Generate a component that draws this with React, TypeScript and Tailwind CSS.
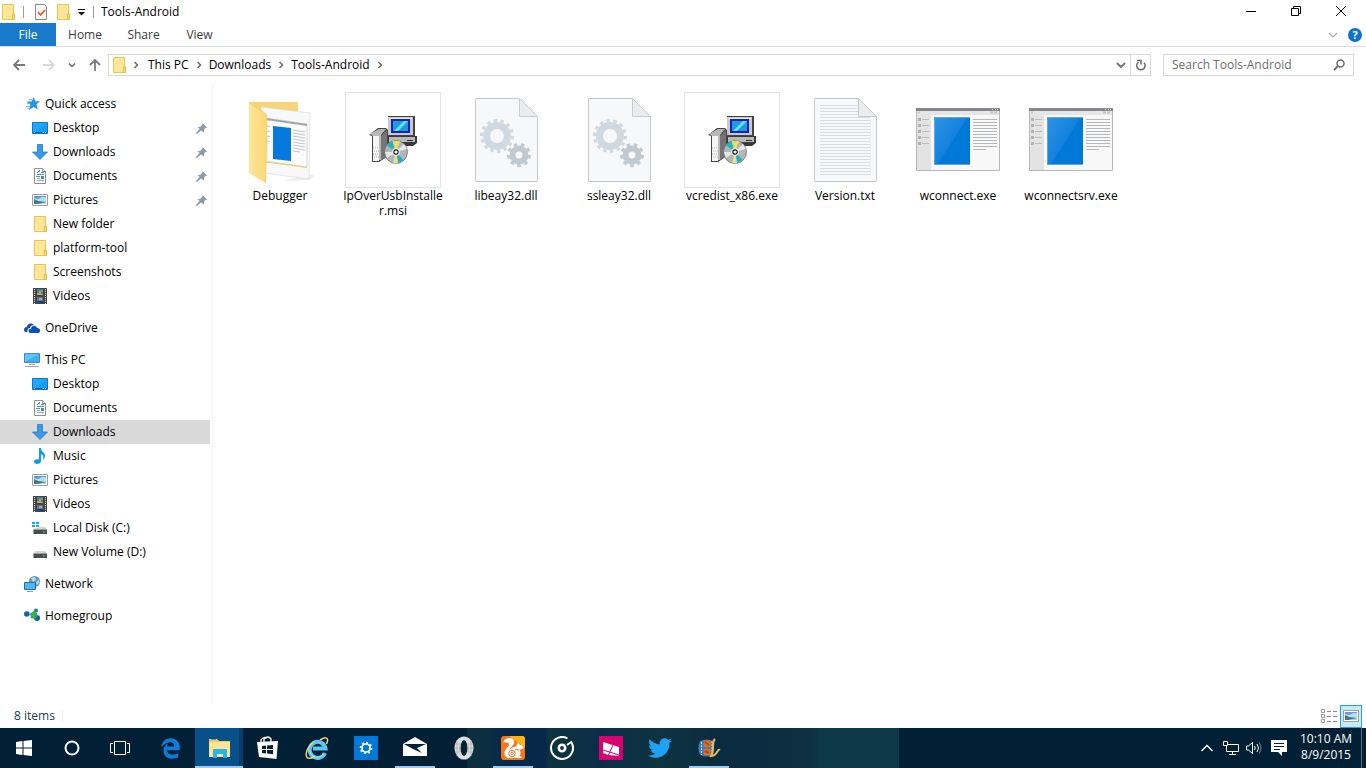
import { useState } from 'react';
import { FaEdgeLegacy, FaTwitter } from 'react-icons/fa';

const quickAccess = [
    { label: 'Desktop', icon: 'desktop', pinned: true },
    { label: 'Downloads', icon: 'downloads', pinned: true },
    { label: 'Documents', icon: 'documents', pinned: true },
    { label: 'Pictures', icon: 'pictures', pinned: true },
    { label: 'New folder', icon: 'folder' },
    { label: 'platform-tool', icon: 'folder' },
    { label: 'Screenshots', icon: 'folder' },
    { label: 'Videos', icon: 'videos' }
];

const thisPc = [
    { label: 'Desktop', icon: 'desktop' },
    { label: 'Documents', icon: 'documents' },
    { label: 'Downloads', icon: 'downloads' },
    { label: 'Music', icon: 'music' },
    { label: 'Pictures', icon: 'pictures' },
    { label: 'Videos', icon: 'videos' },
    { label: 'Local Disk (C:)', icon: 'system' },
    { label: 'New Volume (D:)', icon: 'drive' }
];

const groups = [
    { label: 'Quick access', icon: 'star', items: quickAccess },
    { label: 'OneDrive', icon: 'onedrive', items: [] },
    { label: 'This PC', icon: 'pc', items: thisPc },
    { label: 'Network', icon: 'network', items: [] },
    { label: 'Homegroup', icon: 'homegroup', items: [] }
];

// name is split where a long label wraps
const files = [
    { name: ['Debugger'], icon: 'folder' },
    { name: ['IpOverUsbInstalle', 'r.msi'], icon: 'installer' },
    { name: ['libeay32.dll'], icon: 'dll' },
    { name: ['ssleay32.dll'], icon: 'dll' },
    { name: ['vcredist_x86.exe'], icon: 'installer' },
    { name: ['Version.txt'], icon: 'text' },
    { name: ['wconnect.exe'], icon: 'exe' },
    { name: ['wconnectsrv.exe'], icon: 'exe' }
];

const apps = [
    { name: 'Microsoft Edge', icon: 'edge' },
    { name: 'File Explorer', icon: 'explorer', active: true },
    { name: 'Store', icon: 'store' },
    { name: 'Internet Explorer', icon: 'ie' },
    { name: 'Settings', icon: 'settings' },
    { name: 'Mail', icon: 'mail', running: true },
    { name: 'Opera', icon: 'opera' },
    { name: 'UC Browser', icon: 'squirrel', running: true },
    { name: 'Groove Music', icon: 'groove' },
    { name: 'Lumia', icon: 'lumia' },
    { name: 'Twitter', icon: 'twitter' },
    { name: 'Movie Maker', icon: 'movie', running: true }
];

function SmallIcon({ name }: { name: string }) {
    return (
        <svg width="16" height="16" viewBox="0 0 16 16" className="shrink-0">
            {name === 'folder' && (
                <g>
                    <path d="M2.500 .5h11v9.500h1v5.500h-12z" fill="#ffe69b" stroke="#e9c64c" />
                    <path d="M12.500 15.500v-5.500h2v5.500z" fill="#fbdc78" stroke="#e3bd3f" />
                </g>
            )}
            {name === 'desktop' && (
                <g>
                    <path d="M.5 2.500h15v11H.500z" fill="#22a7ff" stroke="#0a78c8" />
                    <path d="M1 13l14-10v10z" fill="#169bf8" />
                    <path d="M1 12.500h14" stroke="#0a6cb0" />
                    <path d="M2 12.500h1M11 12.500h1M13 12.500h1" stroke="#fff" />
                </g>
            )}
            {name === 'downloads' && (
                <path d="M5.500 .5h5v7.500h5L8 15.500.5 8h5z" fill="#3b97e8" stroke="#2a7cc9" strokeWidth=".8" />
            )}
            {name === 'documents' && (
                <g>
                    <path d="M2.500 .5h8l3 3v12h-11z" fill="#fff" stroke="#8d9297" />
                    <path d="M10.500 .5v3h3" fill="#e6e6e6" stroke="#8d9297" />
                    <path d="M5 4.500h1M7 2.500h1M6 3.500h2M5 6.500h7M5 8.500h3M9 4.500h3" stroke="#3a93cf" />
                    <path d="M5 10.500h3M5 12.500h7M4 8.500h1" stroke="#93a3af" />
                    <path d="M9 8h3v3H9z" fill="#4b89ab" />
                </g>
            )}
            {name === 'pictures' && (
                <g>
                    <path d="M.5 2.500h15v11H.500z" fill="#fff" stroke="#9ba0a4" />
                    <path d="M2 4h12v8H2z" fill="#b5dcf5" />
                    <path d="M2 4h12v1H10L6 7 2 6z" fill="#5c9be0" />
                    <path d="M2 7l4 2 8 1v2H2z" fill="#47747d" />
                    <path d="M5 12l9-2v2z" fill="#a9d5dd" />
                </g>
            )}
            {name === 'videos' && (
                <g>
                    <path d="M1 0h14v16H1z" fill="#444" />
                    <path d="M2.500 1v15M13.500 1v15" stroke="#ddd" strokeDasharray="1 1" />
                    <path d="M5 1h6v6H5zM5 9h6v6H5z" fill="#3e78cf" />
                    <path d="M5 5h2V3h2v3h2v1H5zM7 10h3v2H7z" fill="#d7a32c" />
                    <path d="M8 2h3v2H8z" fill="#76a540" />
                    <path d="M5 13h6v2H5z" fill="#1c3d8d" />
                </g>
            )}
            {name === 'music' && (
                <path
                    d="M7 0h2c0 4 4 4 4 8 0 2-1 3-2 4 1-4 0-5-2-6v7c0 2-2 3-4 3-1.500 0-3-1-3-2.500S4 11 7 11.500z"
                    fill="#0f9bf0"
                />
            )}
            {(name === 'system' || name === 'drive') && (
                <g>
                    <path d="M3.500 7h10l1.500 3H1.500z" fill="#d3d3d3" />
                    <path d="M1.500 9.500h13.500v4.500H1.500z" fill="#4b4e51" />
                    <path d="M1.500 9.500H15" stroke="#9d9fa2" />
                    <path d="M11 12h2" stroke="#49e05a" />
                </g>
            )}
            {name === 'system' && (
                <g>
                    <path d="M0 1h7v7H0z" fill="#fff" />
                    <path d="M0 2h3v2H0zM4 2h3v2H4zM0 5h3v2H0zM4 5h3v2H4z" fill="#0eb0e8" />
                </g>
            )}
            {name === 'star' && (
                <g>
                    <path d="M10 1l1.200 4.200H16l-3.500 3 1.300 5.300L9.500 11 5 14l1.400-5-3.900-3.500h5z" fill="#2395e8" />
                    <path d="M5 3.500h3M3 7.500h3M2 10.500h4M3 12.500h3" stroke="#66b7ee" />
                </g>
            )}
            {name === 'onedrive' && (
                <g fill="#0f4fb3">
                    <path d="M0 10c0-2 1-3 3-3 0-3 4-5 7-2-2 0-4 1-4 3-2 0-3 2-2.500 4H2c-1 0-2-1-2-2z" />
                    <path d="M4.500 11c0-1.500 1-2.500 2.500-2.300C7.500 5 12 4.500 13 8c2 0 3 1 3 2.700S15 13 14 13H7c-1.500 0-2.500-.8-2.500-2z" />
                </g>
            )}
            {name === 'pc' && (
                <g>
                    <path d="M.5 1.500h15v9H.500z" fill="#5fc4ff" stroke="#4c86ad" />
                    <path d="M1 10l14-8v8z" fill="#3bb0f8" />
                    <path d="M5 12.500h6M1 14.500h14" stroke="#9aa8b5" />
                </g>
            )}
            {name === 'network' && (
                <g>
                    <circle cx="10.500" cy="5.500" r="5.500" fill="#6197b5" />
                    <path d="M7 2l4-1 1 3-3 2zM12 6l3-2v3l-2 2z" fill="#c0d9e4" />
                    <path d="M.5 6.500h11v7H.500z" fill="#49b7f8" stroke="#2a719f" />
                    <path d="M3 15.500h6" stroke="#8b9aa8" />
                </g>
            )}
            {name === 'homegroup' && (
                <g>
                    <path d="M3 6h8l1-3M10 7l3 4" stroke="#8fb1c9" fill="none" />
                    <circle cx="2.800" cy="6" r="2.800" fill="#1b5fa8" />
                    <circle cx="12" cy="2.500" r="2" fill="#2378b4" />
                    <circle cx="13" cy="10" r="3" fill="#1b5fa8" />
                    <path d="M6 6l4-3.500 3.500 3-1.500 5-5 0z" fill="#35b24a" />
                </g>
            )}
        </svg>
    );
}

function PinIcon() {
    return (
        <svg width="11" height="11" viewBox="0 0 11 11" className="ml-auto mr-[3px]">
            <path d="M6.500 0L11 4.500 9.500 5 8 6.500v3L5 7.500 1 11H0v-1l3.500-4L1.500 4H4l2-2z" fill="#8f9ba6" />
        </svg>
    );
}

// Document sheet shared by the dll and txt icons
function Sheet() {
    return <path d="M17.500 6.500h44l18 18v65h-62z" fill="#f7f8f9" stroke="#c8cacb" />;
}

// Folded corner, drawn over whatever is on the sheet
function Fold() {
    return (
        <g>
            <path d="M61.500 6v18.500H80V6z" fill="#fff" />
            <path d="M61.500 6.500v18h18z" fill="#ececed" stroke="#c8cacb" />
        </g>
    );
}

function FileIcon({ name }: { name: string }) {
    if (name === 'installer') {
        return (
            <div className="flex size-24 items-center justify-center border border-[#e3e3e3]">
                <svg width="48" height="48" viewBox="0 0 48 48">
                    <path d="M19 0h27v20H19z" fill="#444" />
                    <path d="M19 1h25v18H19z" fill="#c9c9c9" />
                    <path d="M20 2h23v1H20z" fill="#eee" />
                    <path d="M22 3h19v14H22z" fill="#1820b8" />
                    <path d="M24 5h15v10H24z" fill="#169fdc" />
                    <path d="M25 15l10-10h4L29 15z" fill="#6bdcf4" />
                    <path d="M19 20h29v7l-4 3H19z" fill="#3a3a3a" />
                    <path d="M20 21h26v5H20z" fill="#b9b9b9" />
                    <path d="M38 24h6v1h-6z" fill="#333" />
                    <path d="M0 19l9-7h8l2 2v26L10 46H3V20z" fill="#444" />
                    <path d="M1 18l9-5h7l-5 6v25H4V20z" fill="#b8b8b8" />
                    <path d="M4 20h6v25H4z" fill="#f4f4f4" />
                    <path d="M4 32h6M5 35h5M4 38h6M5 41h5" stroke="#bbb" strokeDasharray="1 1" />
                    <path d="M12 20l6-6v27l-6 3z" fill="#757575" />
                    <circle cx="27" cy="36" r="11.500" fill="#b2b5b5" stroke="#666" strokeWidth=".7" />
                    <path d="M27 36L17.500 29l6-4z" fill="#27b3bb" />
                    <path d="M27 36l-3.500-11.200L31 25z" fill="#e6de65" />
                    <path d="M27 36l8-8 3 5z" fill="#e8e8e8" />
                    <path d="M27 36l7.500 8-5 3z" fill="#19b1ca" />
                    <path d="M27 36l2 11.200-5 0z" fill="#e8e28c" />
                    <path d="M27 36L16 36l2 6z" fill="#e6e6e6" />
                    <circle cx="27" cy="36" r="4" fill="#e9e9e9" />
                    <circle cx="27" cy="36" r="2.700" fill="#111" />
                    <circle cx="27" cy="36" r="1.600" fill="#fff" />
                </svg>
            </div>
        );
    }

    return (
        <svg width="96" height="96" viewBox="0 0 96 96">
            <defs>
                <linearGradient id="screen" x1="0" y1="0" x2="0.700" y2="0.600">
                    <stop offset="0" stopColor="#2f93e6" />
                    <stop offset=".75" stopColor="#1482dd" />
                    <stop offset=".8" stopColor="#0078d7" />
                </linearGradient>
                <linearGradient id="flap" x1="0" y1="0" x2="1" y2="0">
                    <stop offset="0" stopColor="#ffe59b" />
                    <stop offset="1" stopColor="#fcd872" />
                </linearGradient>
            </defs>
            {name === 'folder' && (
                <g>
                    <path d="M77 82l6 2-6 4-26 1z" fill="#ededed" />
                    <path d="M17 10h49v65H17z" fill="#f7d67a" />
                    <path d="M29 15l49 6-1 66-45-6z" fill="#f7f8f9" stroke="#dcdedf" strokeWidth=".7" />
                    <path d="M34 26l41 6v43l-41-6z" fill="#fbfbfb" stroke="#c9cbcc" strokeWidth=".7" />
                    <path d="M34 26l41 6v2l-41-6z" fill="#a4a6a8" />
                    <path d="M41 34l18 2v33l-18-2z" fill="#0779dc" />
                    <path
                        d="M61 38l12 2M61 41l12 2M61 44l12 2M61 47l12 2M61 50l12 2M61 53l12 2M61 56l12 2M61 59l7 1M35 34l3 .5M35 39l3 .5M35 44l3 .5M35 49l3 .5"
                        stroke="#c2c4c6"
                    />
                    <path d="M34 70l41 5.500" stroke="#ecc95f" />
                    <path d="M17 10.500l15 10q3 2 3 5L33.500 91 17 81z" fill="url(#flap)" />
                    <path d="M17 10.500l15 10q3 2 3 5L33.500 91" stroke="#efc966" strokeWidth=".8" fill="none" />
                </g>
            )}
            {name === 'dll' && (
                <g>
                    <Sheet />
                    <circle cx="39" cy="44" r="10.500" fill="none" stroke="#d0d8e0" strokeWidth="7" />
                    <circle cx="39" cy="44" r="15.500" fill="none" stroke="#d0d8e0" strokeWidth="3" pathLength="28" strokeDasharray="1 1" />
                    <circle cx="61" cy="63" r="6.500" fill="none" stroke="#c0c9cf" strokeWidth="6" />
                    <circle cx="61" cy="63" r="10.500" fill="none" stroke="#c0c9cf" strokeWidth="3" pathLength="18" strokeDasharray="1 1" />
                    <Fold />
                </g>
            )}
            {name === 'text' && (
                <g>
                    <Sheet />
                    {Array.from({ length: 24 }, (_, i) => (
                        <path key={i} d={`M23 ${13.5 + i * 3}h51`} stroke="#dadcdd" />
                    ))}
                    <Fold />
                </g>
            )}
            {name === 'exe' && (
                <g>
                    <path d="M6.500 16.500h83v62h-83z" fill="#f8f8f8" stroke="#b5b7b9" />
                    <path d="M6 16h84v3H6z" fill="#85878a" />
                    <path d="M82 17.500h1M85 17.500h1M87 17.500h1" stroke="#ddd" />
                    <path d="M7 19h82v4H7z" fill="#e6e6e6" />
                    <path d="M7 23h14v55H7z" fill="#e3e3e3" />
                    <path d="M8 20.500h2M80 20.500h3M84 20.500h3" stroke="#c4c4c4" strokeWidth="2" />
                    {[27, 33, 39, 45, 51].map((y) => (
                        <g key={y}>
                            <path d={`M8 ${y - 1}h3v3h-3z`} fill="#b0b2b4" />
                            <path d={`M12 ${y + 0.5}h7`} stroke="#bcbcbc" />
                        </g>
                    ))}
                    <path d="M24 25h36v48H24z" fill="url(#screen)" />
                    <path d="M24.500 73V25.500H60M24 72.500h36" fill="none" stroke="#5ea9e4" />
                    {Array.from({ length: 11 }, (_, i) => (
                        <path key={i} d={`M63 ${27.5 + i * 3}h${i === 10 ? 13 : 24}`} stroke="#b4b6b8" />
                    ))}
                </g>
            )}
        </svg>
    );
}

function AppIcon({ name }: { name: string }) {
    if (name === 'edge') return <FaEdgeLegacy className="size-[21px] text-[#0f7ad8]" />;
    if (name === 'twitter') return <FaTwitter className="size-6 text-[#1da1f2]" />;

    return (
        <svg width="24" height="24" viewBox="0 0 24 24">
            {name === 'ie' && (
                <g fill="none">
                    <path d="M20 17A8 8 0 1 1 20.500 12.500H8" stroke="#5cc6f2" strokeWidth="4" />
                    <path d="M18.500 17A7 7 0 0 1 5 14" stroke="#a3e2fa" />
                    <path d="M15 4C20 1 23 1 22.500 5q-.2 1.500-1 3" stroke="#f1d263" strokeWidth="1.500" />
                    <path d="M9 5.500C4 9 0 16 1.500 20.500 2.500 23.500 7 22 10 20.500" stroke="#f1d263" strokeWidth="1.500" />
                </g>
            )}
            {name === 'explorer' && (
                <g>
                    <path d="M2 3h8l2 2h11v16H2z" fill="#f5ca55" />
                    <path d="M2 6h21v15H2z" fill="#fde494" />
                    <path d="M4 3h5v1H4z" fill="#39a7dc" />
                    <path d="M6 14q0-1 1-1h12q1 0 1 1v8h-4v-4H10v4H6z" fill="#26b5ea" />
                </g>
            )}
            {name === 'store' && (
                <g>
                    <path d="M8 6V3q4-4 7 0v3M5 6V4q3-4 6-2" fill="none" stroke="#fff" strokeWidth="1.300" />
                    <path d="M1 6l21-1-1.500 18L3 21z" fill="#fff" />
                    <path d="M6 10l4-.5V13H6zM11 9.400l6-.4v4h-6zM6 14h4v3.500L6 17zM11 14h6v4.200l-6-.6z" fill="#012036" />
                </g>
            )}
            {name === 'settings' && (
                <g>
                    <path d="M0 0h24v24H0z" fill="#0078d7" />
                    <circle cx="12" cy="12" r="4" fill="none" stroke="#fff" strokeWidth="1.700" />
                    <circle cx="12" cy="12" r="5.300" fill="none" stroke="#fff" strokeWidth="2" pathLength="16" strokeDasharray="1 1" />
                </g>
            )}
            {name === 'mail' && (
                <g>
                    <path d="M0 8l12-7 12 7v12H0z" fill="#fff" />
                    <path d="M1 8h22l-9 4 5 5-9-4z" fill="#012036" />
                </g>
            )}
            {name === 'opera' && (
                <g>
                    <ellipse cx="12" cy="12" rx="7" ry="9" fill="#012036" stroke="#dedede" strokeWidth="5" />
                    <ellipse cx="12" cy="12" rx="4" ry="8.500" fill="#062338" stroke="#f2f2f2" />
                    <path d="M3 8h5M2 12h5M3 16h5M16 8h5M17 12h5M16 16h5M5 4v16M19 4v16" stroke="#a5a5a5" strokeWidth=".6" />
                </g>
            )}
            {name === 'squirrel' && (
                <g>
                    <rect width="24" height="24" rx="3" fill="#fa7315" />
                    <path d="M8 0h13q3 0 3 3v9L15 5z" fill="#fcb315" />
                    <path
                        d="M2.500 6.500C3 3 6 2 8.500 2c4 0 6 3.500 4 6.500C11 11 8 12 8.500 14.500 10 11.500 12 10.500 15.500 10.500c0-1.500.5-3 1.500-4l1.500 2c2.500.5 4 2 4 4l-4 1.500c2 2.500 1 5.500-1 6l3 .5V22H8.500c-3.500 0-5.500-2.500-5-5.500C4 12 8 11 8 8.500 8 7 5.500 6 2.500 6.500z"
                        fill="#fff"
                    />
                    <circle cx="11" cy="17.500" r="3.200" fill="none" stroke="#f56b15" />
                    <circle cx="11" cy="17.500" r="1.200" fill="none" stroke="#f56b15" strokeWidth=".8" />
                    <path d="M14 13.500l4 .5" fill="none" stroke="#f56b15" />
                </g>
            )}
            {name === 'groove' && (
                <g fill="none" stroke="#fff">
                    <path d="M17.500 2.500A11 11 0 1 0 21.500 6.500" strokeWidth="2" />
                    <path d="M17 9L22 5.500" strokeWidth="2" />
                    <circle cx="12" cy="12" r="3.200" strokeWidth="2.600" />
                </g>
            )}
            {name === 'lumia' && (
                <g>
                    <path d="M0 0h24v24H0z" fill="#d8006f" />
                    <path d="M4 6l16 5v9l-11-1-5-2z" fill="#fff" />
                    <path d="M4 14l16 5M14 9l-5 11" stroke="#d8006f" />
                </g>
            )}
            {name === 'movie' && (
                <g>
                    <path d="M3 5q7-3 13 0v14q-6 3-13 0Q0 12 3 5z" fill="#3c80b8" />
                    <path d="M4.500 6v13M15 5v14" stroke="#b7d8ed" strokeDasharray="2 1" />
                    <path d="M7 4.500h6.500v6.500H6.500zM6.500 13h7v6H7z" fill="#ec6b18" />
                    <path d="M8 6l4 3M8 15l4 2" stroke="#b8431a" strokeWidth="2" />
                    <path d="M18 3c-5 5 1 9-4 17 7 0 6-8 9-6" fill="none" stroke="#e6b85a" strokeWidth="2" />
                </g>
            )}
        </svg>
    );
}

function Chevron({ className }: { className: string }) {
    return (
        <svg width="8" height="8" viewBox="0 0 8 8" className={className}>
            <path d="M2.500 1l3 3-3 3" fill="none" stroke="currentColor" strokeWidth="1.500" />
        </svg>
    );
}

function TitleBar() {
    return (
        <header className="flex h-[23px] items-center">
            <div className="flex items-center">
                <SmallIcon name="folder" />
                <span className="ml-[7px] h-3 w-px bg-[#9a9a9a]" />
                <button aria-label="Properties" className="ml-[9px]">
                    <svg width="16" height="16" viewBox="0 0 16 16">
                        <path d="M2.500 .5h9l2 2v13h-11z" fill="#f8f8f8" stroke="#8b8b8b" />
                        <path d="M5 8l2.500 3L12 6" fill="none" stroke="#ea5a1c" strokeWidth="1.800" />
                    </svg>
                </button>
                <button aria-label="New folder" className="ml-[6px]">
                    <SmallIcon name="folder" />
                </button>
                <button aria-label="Customize Quick Access Toolbar" className="ml-[6px]">
                    <svg width="8" height="8" viewBox="0 0 8 8">
                        <path d="M1 1.500h7" stroke="#111" />
                        <path d="M1 4h7L4.500 7.500z" fill="#111" />
                    </svg>
                </button>
                <span className="ml-[8px] h-3 w-px bg-[#9a9a9a]" />
            </div>
            <h1 className="ml-[7px]">Tools-Android</h1>
            <div className="ml-auto mr-[2px] flex h-full items-center pb-[2px] text-black">
                <button aria-label="Minimize" className="flex h-full w-[46px] items-center justify-center">
                    <svg width="10" height="10" viewBox="0 0 10 10"><path d="M0 5.500h10" stroke="currentColor" /></svg>
                </button>
                <button aria-label="Restore" className="flex h-full w-11 items-center justify-center">
                    <svg width="10" height="10" viewBox="0 0 10 10">
                        <path d="M.5 2.500h7v7h-7zM2.500 2V.5h7v7H8" fill="none" stroke="currentColor" />
                    </svg>
                </button>
                <button aria-label="Close" className="flex h-full w-[46px] items-center justify-center">
                    <svg width="10" height="10" viewBox="0 0 10 10"><path d="M0 0l10 10M10 0L0 10" stroke="currentColor" /></svg>
                </button>
            </div>
        </header>
    );
}

function AddressBar() {
    const [query, setQuery] = useState('');
    const crumbs = ['This PC', 'Downloads', 'Tools-Android'];

    return (
        <div className="flex h-9 items-center pr-3 text-[#6b6b6b]">
            <div className="flex w-[108px] shrink-0 items-center pl-3">
                <button aria-label="Back">
                    <svg width="14" height="14" viewBox="0 0 14 14"><path d="M13 7H2M7 2L2 7l5 5" fill="none" stroke="#7b7b7b" strokeWidth="1.800" /></svg>
                </button>
                <button aria-label="Forward" className="ml-4">
                    <svg width="14" height="14" viewBox="0 0 14 14"><path d="M1 7h11M7 2l5 5-5 5" fill="none" stroke="#dadada" strokeWidth="1.800" /></svg>
                </button>
                <button aria-label="Recent locations" className="ml-3">
                    <Chevron className="rotate-90" />
                </button>
                <button aria-label="Up" className="ml-3">
                    <svg width="14" height="14" viewBox="0 0 14 14"><path d="M7 13V2M2 7l5-5 5 5" fill="none" stroke="#7b7b7b" strokeWidth="1.800" /></svg>
                </button>
            </div>
            <div className="flex h-[22px] min-w-0 flex-1 items-center border border-[#d9d9d9]">
                <span className="ml-[2px]"><SmallIcon name="folder" /></span>
                <Chevron className="ml-[5px] mr-2" />
                {crumbs.map((crumb) => (
                    <span key={crumb} className="flex items-center">
                        <a href="#" className="text-black">{crumb}</a>
                        <Chevron className="mx-[6px]" />
                    </span>
                ))}
                <button aria-label="Previous locations" className="ml-auto px-1">
                    <svg width="10" height="10" viewBox="0 0 10 10"><path d="M1 3l4 4 4-4" fill="none" stroke="#777" strokeWidth="2" /></svg>
                </button>
                <button aria-label="Refresh" className="flex h-full w-5 items-center justify-center border-l border-[#d9d9d9]">
                    <svg width="12" height="12" viewBox="0 0 12 12">
                        <path d="M3.500 3.200A4.200 4.200 0 1 0 9 3.800M2 1.500h4v4" fill="none" stroke="#6b6b6b" strokeWidth="1.500" />
                    </svg>
                </button>
            </div>
            <label className="ml-3 flex h-[22px] w-[191px] items-center border border-[#d9d9d9] px-2">
                <input
                    type="text"
                    aria-label="Search Tools-Android"
                    placeholder="Search Tools-Android"
                    value={query}
                    onChange={(e) => setQuery(e.target.value)}
                    className="min-w-0 flex-1 outline-none placeholder:text-[#6d6d6d]"
                />
                <svg width="12" height="12" viewBox="0 0 12 12">
                    <circle cx="7.500" cy="4.500" r="3.500" fill="none" stroke="#6b6b6b" strokeWidth="1.500" />
                    <path d="M5 7l-4 4" stroke="#6b6b6b" strokeWidth="1.800" />
                </svg>
            </label>
        </div>
    );
}

function Sidebar() {
    return (
        <nav className="flex w-[213px] shrink-0 flex-col gap-2 border-r border-[#f3f3f3] pt-[9px] pr-[2px]">
            {groups.map((group) => (
                <div key={group.label}>
                    <a href="#" className="flex h-6 items-center gap-[5px] pl-6">
                        <SmallIcon name={group.icon} />
                        {group.label}
                    </a>
                    {group.items.map((item) => (
                        <a
                            key={item.label}
                            href="#"
                            className={
                                group.label === 'This PC' && item.label === 'Downloads'
                                    ? 'flex h-6 items-center gap-[5px] bg-[#d9d9d9] pl-8'
                                    : 'flex h-6 items-center gap-[5px] pl-8'
                            }
                        >
                            <SmallIcon name={item.icon} />
                            {item.label}
                            {'pinned' in item && <PinIcon />}
                        </a>
                    ))}
                </div>
            ))}
        </nav>
    );
}

function Taskbar() {
    return (
        <footer className="flex h-10 items-center bg-[#012036] bg-[linear-gradient(90deg,#012036_467px,#0b2f40_467px,#0b2f40_490px,#06294a_500px,#06294a_545px,#0d3440_550px,#0a2e48_600px,#0d3440_660px,#0b2b40_720px,#0e2f42_810px,#0d3848_820px,#0d3848_899px,#012036_899px)] text-white">
            <button aria-label="Start" className="flex w-12 justify-center">
                <svg width="16" height="16" viewBox="0 0 16 16">
                    <path d="M0 2l6.500-1v6.500H0zM7.500 1L16 0v7.500H7.500zM0 8.500h6.500V15L0 14zM7.500 8.500H16V16l-8.500-1z" fill="#fff" />
                </svg>
            </button>
            <button aria-label="Cortana" className="flex w-12 justify-center">
                <svg width="16" height="16" viewBox="0 0 16 16">
                    <circle cx="8" cy="8" r="6.500" fill="none" stroke="#fff" strokeWidth="2" />
                </svg>
            </button>
            <button aria-label="Task View" className="flex w-12 justify-center">
                <svg width="20" height="14" viewBox="0 0 20 14">
                    <path d="M4.500 .5h11v13h-11zM3 2.500H.500v9H3M17 2.500h2.500v9H17" fill="none" stroke="#fff" />
                </svg>
            </button>
            <div className="ml-[2px] flex h-full gap-px">
                {apps.map((app) => (
                    <button
                        key={app.name}
                        aria-label={app.name}
                        className={
                            app.active
                                ? 'flex h-full w-12 flex-col items-center bg-[linear-gradient(90deg,#07508a_44px,#063d6a_44px)]'
                                : 'flex h-full w-12 flex-col items-center'
                        }
                    >
                        <span className="flex flex-1 items-center pt-[2px]"><AppIcon name={app.icon} /></span>
                        {app.active && <span className="h-[2px] w-full bg-[#9dcbf0]" />}
                        {app.running && <span className="h-[2px] w-10 bg-[#9dcbf0]" />}
                        {!app.active && !app.running && <span className="h-[2px]" />}
                    </button>
                ))}
            </div>
            <div className="ml-auto flex h-full items-center">
                <button aria-label="Show hidden icons">
                    <svg width="12" height="8" viewBox="0 0 12 8"><path d="M.5 7L6 1.500 11.500 7" fill="none" stroke="#fff" strokeWidth="1.300" /></svg>
                </button>
                <button aria-label="Network" className="ml-[10px]">
                    <svg width="16" height="14" viewBox="0 0 16 14">
                        <path d="M4 3.500h11.500v7H3.500V5M.500 .5h4v4h-4zM9.500 10.500v3M6 13.500h7" fill="none" stroke="#fff" />
                    </svg>
                </button>
                <button aria-label="Volume" className="ml-[7px]">
                    <svg width="16" height="14" viewBox="0 0 16 14">
                        <path d="M.5 5h2L6.500 1.500v11L2.500 9h-2zM8.500 5q1.500 2 0 4M11 3q3 4 0 8" fill="none" stroke="#fff" />
                        <path d="M13.500 1.500q3 5.500 0 11" fill="none" stroke="#6d8190" />
                    </svg>
                </button>
                <button aria-label="Action center" className="ml-[9px]">
                    <svg width="16" height="16" viewBox="0 0 16 16">
                        <path d="M0 0h16v12h-5v4l-4-4H0z" fill="#fff" />
                        <path d="M3 3.500h10M3 6.500h10M3 9.500h6" stroke="#012036" />
                    </svg>
                </button>
                <button className="ml-1 w-[70px] pb-[2px] text-center leading-4">
                    10:10 AM
                    <br />
                    8/9/2015
                </button>
                <span className="mr-1 h-full w-px bg-[#5a6d7b]" />
            </div>
        </footer>
    );
}

export default function App() {
    return (
        <div className="flex min-h-screen flex-col bg-white font-['Open_Sans','Noto_Sans',sans-serif] text-[12px] leading-4 text-black">
            <TitleBar />
            <div className="flex h-6 border-b border-[#dadbdc] text-[#3b3b3b]">
                <button className="w-14 bg-[#1979ca] text-white">File</button>
                <button className="w-[58px]">Home</button>
                <button className="w-[59px]">Share</button>
                <button className="w-[53px]">View</button>
                <div className="ml-auto mr-[4px] flex items-center gap-[10px]">
                    <button aria-label="Expand the Ribbon">
                        <svg width="10" height="10" viewBox="0 0 10 10"><path d="M1 3l4 4 4-4" fill="none" stroke="#aaa" strokeWidth="1.200" /></svg>
                    </button>
                    <button aria-label="Help" className="size-[14px] rounded-full bg-[#0d74cc] text-[11px] leading-[14px] font-bold text-white">?</button>
                </div>
            </div>
            <AddressBar />
            <div className="flex flex-1">
                <Sidebar />
                <main className="flex flex-1 flex-wrap content-start gap-[17px] pt-[9px] pl-[19px]">
                    {files.map((file) => (
                        <button key={file.name[0]} className="flex w-24 flex-col items-center leading-[15px]">
                            <FileIcon name={file.icon} />
                            {file.name.map((line) => (
                                <span key={line} className="whitespace-nowrap">{line}</span>
                            ))}
                        </button>
                    ))}
                </main>
            </div>
            <div className="flex h-6 items-center pl-[14px] text-[#1e395b]">
                8 items
                <span className="ml-[7px] h-3 w-px bg-[#eee]" />
                <div className="ml-auto mr-1 flex items-center gap-[3px]">
                    <button aria-label="Details view">
                        <svg width="16" height="14" viewBox="0 0 16 14">
                            <path d="M.5 .5h3v3h-3zM.5 5.500h3v3h-3zM.5 10.500h3v3h-3z" fill="#fff" stroke="#999" />
                            <path d="M6 2.500h4M12 2.500h4M6 7.500h4M12 7.500h4M6 12.500h4M12 12.500h4" stroke="#8a8a8a" />
                        </svg>
                    </button>
                    <button aria-label="Large thumbnails" className="flex h-[23px] w-[22px] items-center justify-center border border-[#26a0da] bg-[#cbe8f6]">
                        <SmallIcon name="pictures" />
                    </button>
                </div>
            </div>
            <Taskbar />
        </div>
    );
}
